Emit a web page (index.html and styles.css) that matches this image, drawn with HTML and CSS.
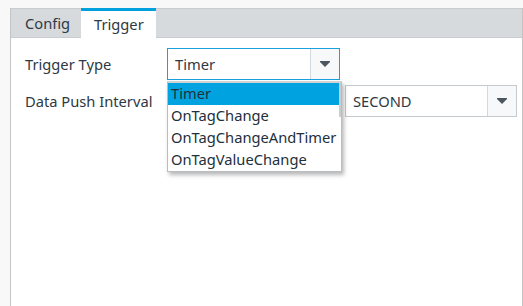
FILE: index.html
```html
<!DOCTYPE html>
<html lang="en">
<head>
    <meta charset="UTF-8">
    <title>Trigger</title>
    <link rel="stylesheet" href="styles.css">
</head>
<body>
    <div class="panel">
        <div class="tabs">
            <div class="tab">Config</div>
            <div class="tab active">Trigger</div>
        </div>
        <div class="form">
            <label class="label">Trigger Type</label>
            <div class="select focus">
                <span class="value">Timer</span>
                <span class="arrow">
                    <svg width="10" height="6" viewBox="0 0 10 6"><path d="M0 0H10V1L5 6L0 1Z" fill="#4b5660"/></svg>
                </span>
            </div>
            <div></div>

            <label class="label">Data Push Interval</label>
            <div class="input"></div>
            <div class="select">
                <span class="value">SECOND</span>
                <span class="arrow">
                    <svg width="10" height="6" viewBox="0 0 10 6"><path d="M0 0H10V1L5 6L0 1Z" fill="#4b5660"/></svg>
                </span>
            </div>

            <ul class="dropdown">
                <li class="selected">Timer</li>
                <li>OnTagChange</li>
                <li>OnTagChangeAndTimer</li>
                <li>OnTagValueChange</li>
                <span class="thumb"></span>
            </ul>
        </div>
    </div>
</body>
</html>
```

FILE: styles.css
```css
* {
    margin: 0;
    padding: 0;
    box-sizing: border-box;
}

body {
    background-color: #f8f8f8;
    font-family: "Noto Sans", "Open Sans", sans-serif;
    font-size: 14.7px;
    color: #2e3944;
    padding: 8px 0 0 10px;
    height: 306px;
    overflow: hidden;
}

.panel {
    width: 513px;
    height: 298px;
    background: white;
    border-left: 1px solid #c4c4c4;
    border-right: 1px solid #c4c4c4;
}

.tabs {
    display: flex;
    height: 30px;
    background-color: #d6dadd;
    border-top: 1px solid #c8ccd0;
    border-bottom: 1px solid #c8ccd0;
}

.tab {
    width: 70px;
    padding-left: 14px;
    line-height: 27px;
    padding-top: 1px;
}

.tab.active {
    width: 75px;
    background: white;
    border-top: 3px solid #00a0dc;
    margin-top: -1px;
    margin-bottom: -1px;
    padding-left: 13px;
    padding-top: 0;
}

.form {
    position: relative;
    display: grid;
    grid-template-columns: 137px 173px 172px;
    grid-template-rows: 32px 32px;
    column-gap: 5px;
    row-gap: 5px;
    align-items: center;
    padding: 10px 0 0 14px;
}

.select {
    display: flex;
    height: 32px;
    border: 1px solid #c5cace;
    background: white;
}

.select.focus {
    border-color: #1aa0dc;
}

.value {
    flex: 1;
    padding-left: 7px;
    line-height: 30px;
}

.arrow {
    width: 29px;
    display: flex;
    align-items: center;
    justify-content: center;
    border-left: 1px solid #d3d8dc;
    background: #f6f8f9;
}

.input {
    height: 32px;
    border: 1px solid #c5cace;
}

.dropdown {
    position: absolute;
    left: 156px;
    top: 43px;
    width: 175px;
    list-style: none;
    background: white;
    border: 1px solid #b8bdc2;
    border-top: 2px solid #cfd3d6;
    box-shadow: 2px 3px 4px rgba(0, 0, 0, 0.28);
    color: #22303b;
}

.dropdown li {
    height: 22px;
    line-height: 21px;
    padding-left: 3px;
    white-space: nowrap;
}

.dropdown li.selected {
    background-color: #00a3e0;
}

.thumb {
    position: absolute;
    right: 0;
    top: 0;
    width: 2px;
    height: 34px;
    background: #c9cdd0;
}
```
